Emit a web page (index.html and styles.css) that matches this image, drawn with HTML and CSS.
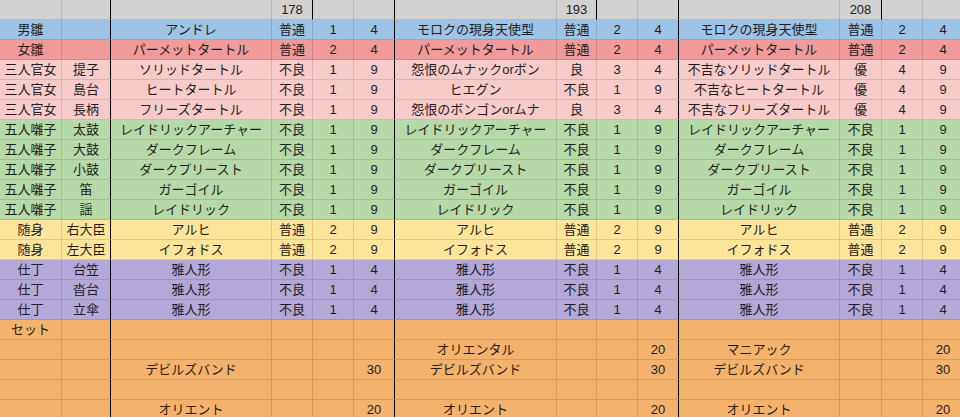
FILE: index.html
```html
<!DOCTYPE html>
<html lang="ja">
<head>
<meta charset="utf-8">
<title>雛人形 表</title>
<link rel="stylesheet" href="styles.css">
</head>
<body>
<table class="sheet">
  <colgroup>
    <col class="w-a"><col class="w-b"><col class="w-name"><col class="w-n"><col class="w-n"><col class="w-n">
    <col class="w-name2"><col class="w-n0"><col class="w-n"><col class="w-n">
    <col class="w-name"><col class="w-n2"><col class="w-n"><col class="w-n">
  </colgroup>
  <tbody>
    <tr class="r-head">
      <td></td><td class="sep"></td><td></td><td class="sep">178</td><td></td><td class="sep"></td>
      <td></td><td class="sep">193</td><td></td><td class="sep"></td>
      <td></td><td class="sep">208</td><td></td><td></td>
    </tr>
    <tr class="r-blue">
      <td>男雛</td><td class="sep"></td><td>アンドレ</td><td>普通</td><td>1</td><td class="sep">4</td>
      <td>モロクの現身天使型</td><td>普通</td><td>2</td><td class="sep">4</td>
      <td>モロクの現身天使型</td><td>普通</td><td>2</td><td>4</td>
    </tr>
    <tr class="r-red">
      <td>女雛</td><td class="sep"></td><td>パーメットタートル</td><td>普通</td><td>2</td><td class="sep">4</td>
      <td>パーメットタートル</td><td>普通</td><td>2</td><td class="sep">4</td>
      <td>パーメットタートル</td><td>普通</td><td>2</td><td>4</td>
    </tr>
    <tr class="r-pink">
      <td>三人官女</td><td class="sep">提子</td><td>ソリッドタートル</td><td>不良</td><td>1</td><td class="sep">9</td>
      <td>怨恨のムナックorボン</td><td>良</td><td>3</td><td class="sep">4</td>
      <td>不吉なソリッドタートル</td><td>優</td><td>4</td><td>9</td>
    </tr>
    <tr class="r-pink">
      <td>三人官女</td><td class="sep">島台</td><td>ヒートタートル</td><td>不良</td><td>1</td><td class="sep">9</td>
      <td>ヒエグン</td><td>不良</td><td>1</td><td class="sep">9</td>
      <td>不吉なヒートタートル</td><td>優</td><td>4</td><td>9</td>
    </tr>
    <tr class="r-pink">
      <td>三人官女</td><td class="sep">長柄</td><td>フリーズタートル</td><td>不良</td><td>1</td><td class="sep">9</td>
      <td>怨恨のボンゴンorムナ</td><td>良</td><td>3</td><td class="sep">4</td>
      <td>不吉なフリーズタートル</td><td>優</td><td>4</td><td>9</td>
    </tr>
    <tr class="r-green">
      <td>五人囃子</td><td class="sep">太鼓</td><td>レイドリックアーチャー</td><td>不良</td><td>1</td><td class="sep">9</td>
      <td>レイドリックアーチャー</td><td>不良</td><td>1</td><td class="sep">9</td>
      <td>レイドリックアーチャー</td><td>不良</td><td>1</td><td>9</td>
    </tr>
    <tr class="r-green">
      <td>五人囃子</td><td class="sep">大鼓</td><td>ダークフレーム</td><td>不良</td><td>1</td><td class="sep">9</td>
      <td>ダークフレーム</td><td>不良</td><td>1</td><td class="sep">9</td>
      <td>ダークフレーム</td><td>不良</td><td>1</td><td>9</td>
    </tr>
    <tr class="r-green">
      <td>五人囃子</td><td class="sep">小鼓</td><td>ダークプリースト</td><td>不良</td><td>1</td><td class="sep">9</td>
      <td>ダークプリースト</td><td>不良</td><td>1</td><td class="sep">9</td>
      <td>ダークプリースト</td><td>不良</td><td>1</td><td>9</td>
    </tr>
    <tr class="r-green">
      <td>五人囃子</td><td class="sep">笛</td><td>ガーゴイル</td><td>不良</td><td>1</td><td class="sep">9</td>
      <td>ガーゴイル</td><td>不良</td><td>1</td><td class="sep">9</td>
      <td>ガーゴイル</td><td>不良</td><td>1</td><td>9</td>
    </tr>
    <tr class="r-green">
      <td>五人囃子</td><td class="sep">謡</td><td>レイドリック</td><td>不良</td><td>1</td><td class="sep">9</td>
      <td>レイドリック</td><td>不良</td><td>1</td><td class="sep">9</td>
      <td>レイドリック</td><td>不良</td><td>1</td><td>9</td>
    </tr>
    <tr class="r-yellow">
      <td>随身</td><td class="sep">右大臣</td><td>アルヒ</td><td>普通</td><td>2</td><td class="sep">9</td>
      <td>アルヒ</td><td>普通</td><td>2</td><td class="sep">9</td>
      <td>アルヒ</td><td>普通</td><td>2</td><td>9</td>
    </tr>
    <tr class="r-yellow">
      <td>随身</td><td class="sep">左大臣</td><td>イフォドス</td><td>普通</td><td>2</td><td class="sep">9</td>
      <td>イフォドス</td><td>普通</td><td>2</td><td class="sep">9</td>
      <td>イフォドス</td><td>普通</td><td>2</td><td>9</td>
    </tr>
    <tr class="r-purple">
      <td>仕丁</td><td class="sep">台笠</td><td>雅人形</td><td>不良</td><td>1</td><td class="sep">4</td>
      <td>雅人形</td><td>不良</td><td>1</td><td class="sep">4</td>
      <td>雅人形</td><td>不良</td><td>1</td><td>4</td>
    </tr>
    <tr class="r-purple">
      <td>仕丁</td><td class="sep">沓台</td><td>雅人形</td><td>不良</td><td>1</td><td class="sep">4</td>
      <td>雅人形</td><td>不良</td><td>1</td><td class="sep">4</td>
      <td>雅人形</td><td>不良</td><td>1</td><td>4</td>
    </tr>
    <tr class="r-purple">
      <td>仕丁</td><td class="sep">立傘</td><td>雅人形</td><td>不良</td><td>1</td><td class="sep">4</td>
      <td>雅人形</td><td>不良</td><td>1</td><td class="sep">4</td>
      <td>雅人形</td><td>不良</td><td>1</td><td>4</td>
    </tr>
    <tr class="r-orange">
      <td>セット</td><td class="sep"></td><td></td><td></td><td></td><td class="sep"></td>
      <td></td><td></td><td></td><td class="sep"></td>
      <td></td><td></td><td></td><td></td>
    </tr>
    <tr class="r-orange">
      <td></td><td class="sep"></td><td></td><td></td><td></td><td class="sep"></td>
      <td>オリエンタル</td><td></td><td></td><td class="sep">20</td>
      <td>マニアック</td><td></td><td></td><td>20</td>
    </tr>
    <tr class="r-orange">
      <td></td><td class="sep"></td><td>デビルズバンド</td><td></td><td></td><td class="sep">30</td>
      <td>デビルズバンド</td><td></td><td></td><td class="sep">30</td>
      <td>デビルズバンド</td><td></td><td></td><td>30</td>
    </tr>
    <tr class="r-orange">
      <td></td><td class="sep"></td><td></td><td></td><td></td><td class="sep"></td>
      <td></td><td></td><td></td><td class="sep"></td>
      <td></td><td></td><td></td><td></td>
    </tr>
    <tr class="r-orange">
      <td></td><td class="sep"></td><td>オリエント</td><td></td><td></td><td class="sep">20</td>
      <td>オリエント</td><td></td><td></td><td class="sep">20</td>
      <td>オリエント</td><td></td><td></td><td>20</td>
    </tr>
  </tbody>
</table>
</body>
</html>
```
FILE: styles.css
```css
html, body {
  margin: 0;
  padding: 0;
  background: #ffffff;
  overflow: hidden;
}

.sheet {
  table-layout: fixed;
  width: 964px;
  border-collapse: separate;
  border-spacing: 0;
  font-family: "Liberation Sans", "Noto Sans CJK JP", sans-serif;
  font-size: 13px;
  color: #1e1e1e;
}

.w-a { width: 62px; }
.w-b { width: 49px; }
.w-name { width: 161px; }
.w-name2 { width: 162px; }
.w-n { width: 41px; }
.w-n0 { width: 40px; }
.w-n2 { width: 42px; }

.sheet td {
  box-sizing: border-box;
  height: 20px;
  padding: 0;
  text-align: center;
  vertical-align: middle;
  line-height: 19px;
  white-space: nowrap;
  overflow: hidden;
  border-right: 1px solid rgba(0, 0, 0, 0.12);
  border-bottom: 1px solid rgba(0, 0, 0, 0.12);
}

.sheet td.sep {
  border-right-color: #000000;
}

.r-head td { background: #d1d1d1; }
.r-head td:nth-child(6),
.r-head td:nth-child(10) { border-right-color: #000; }

.r-blue td { background: #9dc3e6; }
.r-red td { background: #f09a9a; }
.r-pink td { background: #f8cbcb; }
.r-green td { background: #b5d9a7; }
.r-yellow td { background: #ffe59a; }
.r-purple td { background: #b4a8d8; }
.r-orange td { background: #f4b26c; }

/* data rows: only the group separators (B, F, J) are black */
.r-blue td.sep,
.r-red td.sep,
.r-pink td.sep,
.r-green td.sep,
.r-yellow td.sep,
.r-purple td.sep,
.r-orange td.sep {
  border-right-color: #000;
}
```
